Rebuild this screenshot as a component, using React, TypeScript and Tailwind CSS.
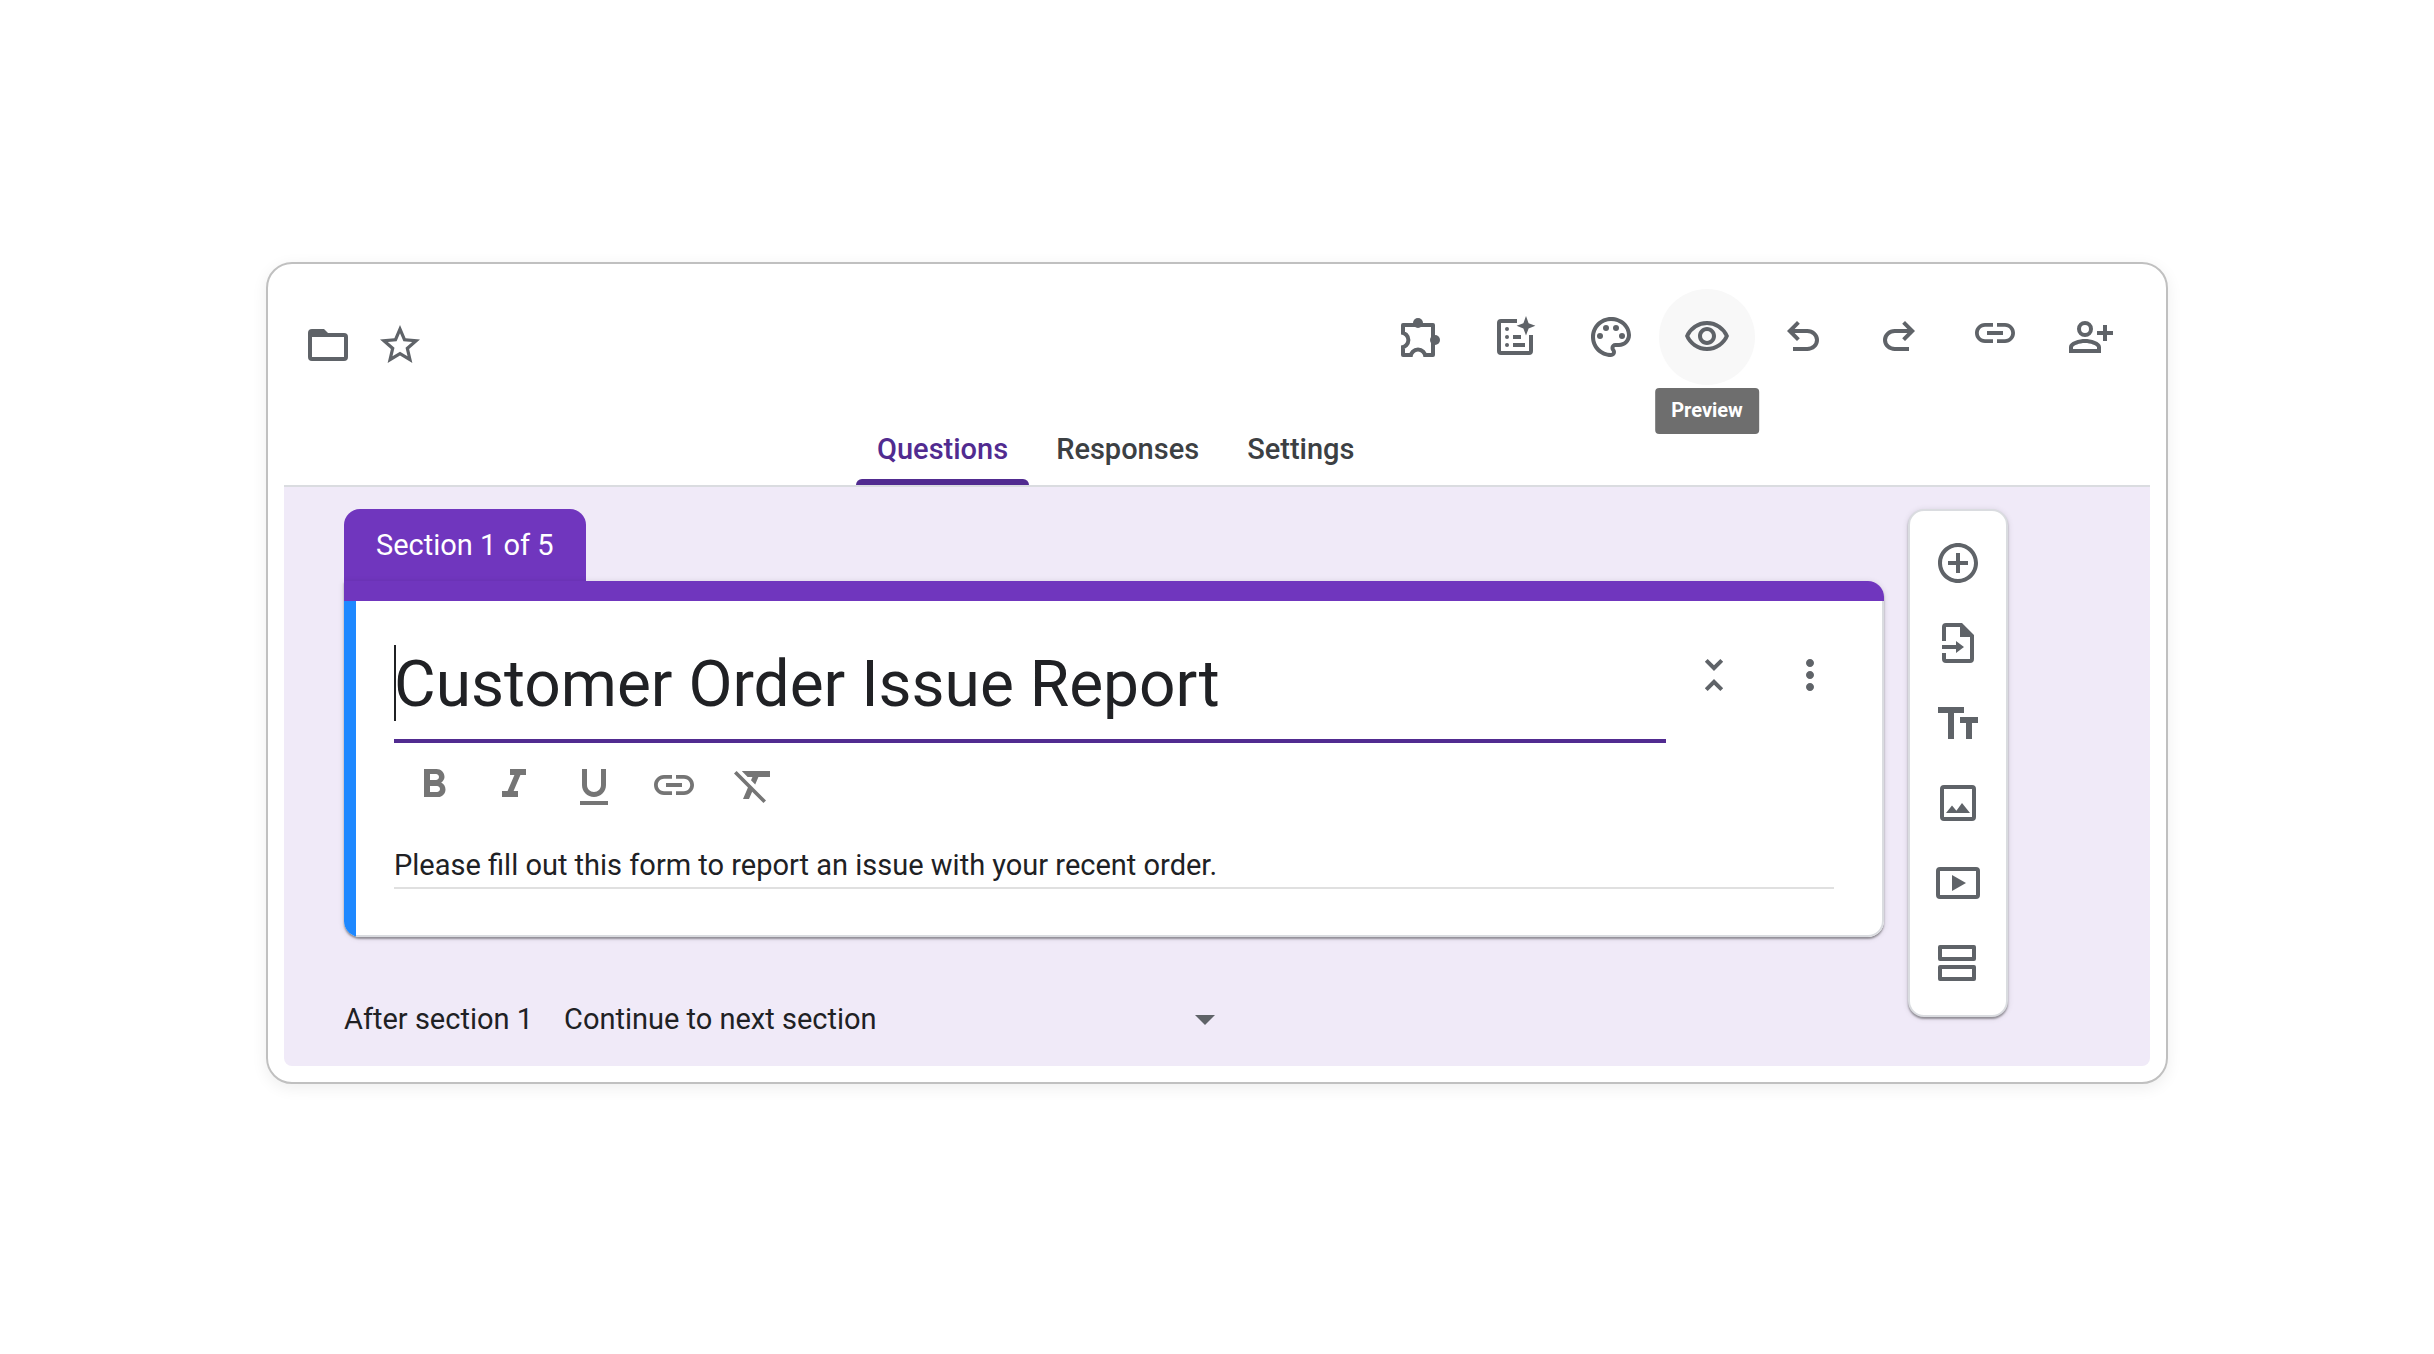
import React, { useState } from "react";

type IconProps = { children: React.ReactNode };

function Icon({ children }: IconProps) {
  return (
    <svg viewBox="0 0 24 24" className="size-12 shrink-0" fill="currentColor" aria-hidden="true">
      {children}
    </svg>
  );
}

const linkPath =
  "M3.9 12c0-1.71 1.39-3.1 3.1-3.1h4V7H7c-2.76 0-5 2.24-5 5s2.24 5 5 5h4v-1.9H7c-1.71 0-3.1-1.39-3.1-3.1zM8 13h8v-2H8v2zm9-6h-4v1.9h4c1.71 0 3.1 1.39 3.1 3.1s-1.39 3.1-3.1 3.1h-4V17h4c2.76 0 5-2.24 5-5s-2.24-5-5-5z";
const undoPath =
  "M7 19v-2h7.1q1.575 0 2.738-1T18 13.5T16.838 11T14.1 10H7.8l2.6 2.6L9 14L4 9l5-5l1.4 1.4L7.8 8h6.3q2.425 0 4.163 1.575T20 13.5t-1.737 3.925T14.1 19z";

const headerActions: { label: string; icon: React.ReactNode; tooltip?: boolean }[] = [
  {
    label: "Add-ons",
    icon: (
      <>
        <path
          d="M4 10.4V6H19V21H14.8M8.2 21H4V16.6M3 9.8A3.7 3.7 0 0 1 3 17.2M7.8 22A3.7 3.7 0 0 1 15.2 22"
          fill="none"
          stroke="currentColor"
          strokeWidth="2"
          strokeLinejoin="round"
        />
        <circle cx="11.5" cy="5" r="2.5" />
        <circle cx="20" cy="13.5" r="2.5" />
      </>
    ),
  },
  {
    label: "Help me create a form",
    icon: (
      <>
        <path d="M13 3H5a2 2 0 0 0-2 2v14a2 2 0 0 0 2 2h14a2 2 0 0 0 2-2v-8h-2v8H5V5h8z" />
        <circle cx="8" cy="8" r="1" />
        <circle cx="8" cy="12" r="1" />
        <circle cx="8" cy="16" r="1" />
        <path d="M11 11h4v2h-4zM11 15h6v2h-6z" />
        <path d="M17.5 1.5l1.3 3.6 3.4 1.3-3.4 1.3-1.3 3.6-1.3-3.6-3.4-1.3 3.4-1.3z" />
      </>
    ),
  },
  {
    label: "Customize theme",
    icon: (
      <>
        <path d="M12 22C6.49 22 2 17.51 2 12S6.49 2 12 2s10 4.04 10 9c0 3.31-2.69 6-6 6h-1.77c-.28 0-.5.22-.5.5 0 .12.05.23.13.33.41.47.64 1.06.64 1.67A2.5 2.5 0 0 1 12 22zm0-18c-4.41 0-8 3.59-8 8s3.59 8 8 8c.28 0 .5-.22.5-.5a.54.54 0 0 0-.14-.35c-.41-.46-.63-1.05-.63-1.65a2.5 2.5 0 0 1 2.5-2.5H16c2.21 0 4-1.79 4-4 0-3.86-3.59-7-8-7z" />
        <circle cx="6.5" cy="11.5" r="1.5" />
        <circle cx="9.5" cy="7.5" r="1.5" />
        <circle cx="14.5" cy="7.5" r="1.5" />
        <circle cx="17.5" cy="11.5" r="1.5" />
      </>
    ),
  },
  {
    label: "Preview",
    tooltip: true,
    icon: (
      <path d="M12 6a9.77 9.77 0 0 1 8.82 5.5C19.17 14.87 15.79 17 12 17s-7.17-2.13-8.82-5.5A9.77 9.77 0 0 1 12 6m0-2C7 4 2.73 7.11 1 11.5 2.73 15.89 7 19 12 19s9.27-3.11 11-7.5C21.27 7.11 17 4 12 4zm0 5a2.5 2.5 0 0 1 0 5 2.5 2.5 0 0 1 0-5m0-2c-2.48 0-4.5 2.02-4.5 4.5S9.52 16 12 16s4.5-2.02 4.5-4.5S14.48 7 12 7z" />
    ),
  },
  { label: "Undo", icon: <path d={undoPath} /> },
  { label: "Redo", icon: <path d={undoPath} transform="matrix(-1 0 0 1 24 0)" /> },
  { label: "Copy responder link", icon: <path d={linkPath} transform="translate(0 -2)" /> },
  {
    label: "Share",
    icon: (
      <path
        fillRule="evenodd"
        d="M9 4a4 4 0 1 0 0 8 4 4 0 0 0 0-8zm0 2a2 2 0 1 1 0 4 2 2 0 0 1 0-4zM1 17v3h16v-3c0-2.7-5.3-4-8-4s-8 1.3-8 4zm2 .1c.2-.9 3.3-2.1 6-2.1s5.8 1.2 6 2.1V18H3zM18 6v3h-3v2h3v3h2v-3h3V9h-3V6z"
      />
    ),
  },
];

const formatActions: { label: string; icon: React.ReactNode }[] = [
  {
    label: "Bold",
    icon: (
      <path d="M15.6 10.79c.97-.67 1.65-1.77 1.65-2.79 0-2.26-1.75-4-4-4H7v14h7.04c2.09 0 3.71-1.7 3.71-3.79 0-1.52-.86-2.82-2.15-3.42zM10 6.5h3c.83 0 1.5.67 1.5 1.5s-.67 1.5-1.5 1.5h-3v-3zm3.5 9H10v-3h3.5c.83 0 1.5.67 1.5 1.5s-.67 1.5-1.5 1.5z" />
    ),
  },
  { label: "Italic", icon: <path d="M10 4v3h2.21l-3.42 8H6v3h8v-3h-2.21l3.42-8H18V4z" /> },
  {
    label: "Underline",
    icon: (
      <path
        transform="translate(0 1)"
        d="M12 17c3.31 0 6-2.69 6-6V3h-2.5v8c0 1.93-1.57 3.5-3.5 3.5S8.5 12.93 8.5 11V3H6v8c0 3.31 2.69 6 6 6zm-7 2v2h14v-2H5z"
      />
    ),
  },
  { label: "Insert link", icon: <path d={linkPath} /> },
  {
    label: "Remove formatting",
    icon: (
      <path d="M3.27 5L2 6.27l6.97 6.97L6.5 19h3l1.57-3.66L16.73 21 18 19.73 3.55 5.27 3.27 5zM6 5v.18L8.82 8h2.4l-.72 1.68 2.1 2.1L14.21 8H20V5H6z" />
    ),
  },
];

const sideActions: { label: string; icon: React.ReactNode }[] = [
  {
    label: "Add question",
    icon: (
      <path d="M13 7h-2v4H7v2h4v4h2v-4h4v-2h-4V7zm-1-5C6.48 2 2 6.48 2 12s4.48 10 10 10 10-4.48 10-10S17.52 2 12 2zm0 18c-4.41 0-8-3.59-8-8s3.59-8 8-8 8 3.59 8 8-3.59 8-8 8z" />
    ),
  },
  {
    label: "Import questions",
    icon: (
      <>
        <path d="M14 2H6a2 2 0 0 0-2 2v7h2V4h7v5h5v11H6v-3H4v3a2 2 0 0 0 2 2h12a2 2 0 0 0 2-2V8z" />
        <path d="M4 13h7v-2l4 3-4 3v-2H4z" />
      </>
    ),
  },
  {
    label: "Add title and description",
    icon: <path d="M2 4v3h5v13h3V7h5V4zM13 9v3h3v8h3v-8h3V9z" />,
  },
  {
    label: "Add image",
    icon: (
      <>
        <path d="M19 5v14H5V5h14m0-2H5a2 2 0 0 0-2 2v14a2 2 0 0 0 2 2h14a2 2 0 0 0 2-2V5a2 2 0 0 0-2-2z" />
        <path d="M6 17l3-3.8 2.2 2.7L14 12l4 5z" />
      </>
    ),
  },
  {
    label: "Add video",
    icon: (
      <>
        <path d="M21 6v12H3V6h18m0-2H3a2 2 0 0 0-2 2v12a2 2 0 0 0 2 2h18a2 2 0 0 0 2-2V6a2 2 0 0 0-2-2z" />
        <path d="M9 8l7 4-7 4z" />
      </>
    ),
  },
  {
    label: "Add section",
    icon: (
      <path
        fillRule="evenodd"
        d="M3 3h17a1 1 0 0 1 1 1v6a1 1 0 0 1-1 1H3a1 1 0 0 1-1-1V4a1 1 0 0 1 1-1zm1 2v4h15V5zM3 13h17a1 1 0 0 1 1 1v6a1 1 0 0 1-1 1H3a1 1 0 0 1-1-1v-6a1 1 0 0 1 1-1zm1 2v4h15v-4z"
      />
    ),
  },
];

const tabs = ["Questions", "Responses", "Settings"];

function Header() {
  return (
    <header className="flex items-start justify-between pl-5 pr-[11px] pt-[9px] text-[#5f6368]">
      <div className="flex gap-6 pt-8">
        <button type="button" aria-label="Move to folder">
          <Icon>
            <path d="M20 6h-8l-2-2H4a2 2 0 0 0-2 2v12a2 2 0 0 0 2 2h16a2 2 0 0 0 2-2V8a2 2 0 0 0-2-2zm0 12H4V8h16z" />
          </Icon>
        </button>
        <button type="button" aria-label="Star">
          <Icon>
            <path d="M22 9.24l-7.19-.62L12 2 9.19 8.63 2 9.24l5.46 4.73L5.82 21 12 17.27 18.18 21l-1.63-7.03L22 9.24zM12 15.4l-3.76 2.27 1-4.28-3.32-2.88 4.38-.38L12 6.1l1.71 4.04 4.38.38-3.32 2.88 1 4.28L12 15.4z" />
          </Icon>
        </button>
      </div>
      <div className="flex">
        {headerActions.map((action) => (
          <div key={action.label} className="relative">
            <button
              type="button"
              aria-label={action.label}
              className={`flex size-24 items-center justify-center rounded-full ${action.tooltip ? "bg-[#f8f8f8]" : ""}`}
            >
              <Icon>{action.icon}</Icon>
            </button>
            {action.tooltip && (
              <span
                role="tooltip"
                className="absolute left-1/2 top-[99px] -translate-x-1/2 rounded bg-[#6e6e6e] px-4 pb-[10px] pt-2 text-[20px] font-bold leading-7 text-white"
              >
                Preview
              </span>
            )}
          </div>
        ))}
      </div>
    </header>
  );
}

function Tabs() {
  const [active, setActive] = useState("Questions");
  return (
    <nav role="tablist" className="flex gap-[6px] pl-[572px] pt-5">
      {tabs.map((tab) => {
        const selected = tab === active;
        return (
          <button
            key={tab}
            type="button"
            role="tab"
            aria-selected={selected}
            onClick={() => setActive(tab)}
            className={`pt-6 text-[29px] font-medium leading-10 ${selected ? "text-[#512b90]" : "text-[#3c4043]"}`}
          >
            <span className="block px-[21px] pb-[10px]">{tab}</span>
            <span className={`block h-[6px] rounded-t-[6px] ${selected ? "bg-[#512b90]" : ""}`} />
          </button>
        );
      })}
    </nav>
  );
}

function SectionCard() {
  const [title, setTitle] = useState("Customer Order Issue Report");
  const [description, setDescription] = useState(
    "Please fill out this form to report an issue with your recent order."
  );
  return (
    <section>
      <h2 className="flex h-[72px] w-fit items-start rounded-t-2xl bg-[#7036be] px-8 pt-4 text-[29px] leading-10 text-white">
        Section 1 of 5
      </h2>
      <div className="overflow-hidden rounded-b-2xl rounded-tr-2xl bg-white shadow-[0_2px_2px_rgba(0,0,0,0.35),0_1px_6px_rgba(0,0,0,0.12)]">
        <div className="h-5 bg-[#7036be]" />
        <div className="flex">
          <div className="w-3 shrink-0 bg-[#1e88ff]" />
          <div className="min-w-0 flex-1 rounded-br-2xl border-b-2 border-r-2 border-[#dadce0] pb-[46px] pl-[38px]">
            <div className="flex pr-6 text-[#5f6368]">
              <div className="relative flex-1 border-b-4 border-[#512b90] pb-[18px] pt-11">
                <input
                  type="text"
                  aria-label="Section title"
                  value={title}
                  onChange={(e) => setTitle(e.target.value)}
                  className="block h-[76px] w-full pt-[2px] text-[64px] leading-[74px] text-[#202124] outline-none"
                />
                <span className="absolute left-0 top-11 h-[76px] w-[2px] bg-[#202124]" />
              </div>
              <div className="flex pt-[26px]">
                <button type="button" aria-label="Collapse section" className="flex size-24 items-center justify-center">
                  <Icon>
                    <path d="M7.41 18.59L8.83 20 12 16.83 15.17 20l1.41-1.41L12 14l-4.59 4.59zm9.18-13.18L15.17 4 12 7.17 8.83 4 7.41 5.41 12 10l4.59-4.59z" />
                  </Icon>
                </button>
                <button type="button" aria-label="More options" className="flex size-24 items-center justify-center">
                  <Icon>
                    <path d="M12 8c1.1 0 2-.9 2-2s-.9-2-2-2-2 .9-2 2 .9 2 2 2zm0 2c-1.1 0-2 .9-2 2s.9 2 2 2 2-.9 2-2-.9-2-2-2zm0 6c-1.1 0-2 .9-2 2s.9 2 2 2 2-.9 2-2-.9-2-2-2z" />
                  </Icon>
                </button>
              </div>
            </div>
            <div className="flex gap-8 pl-4 pt-[18px] text-[#757575]">
              {formatActions.map((action) => (
                <button key={action.label} type="button" aria-label={action.label}>
                  <Icon>{action.icon}</Icon>
                </button>
              ))}
            </div>
            <div className="mr-12 mt-9 border-b-2 border-[#e0e0e0] pb-[2px]">
              <input
                type="text"
                aria-label="Section description"
                value={description}
                onChange={(e) => setDescription(e.target.value)}
                className="block h-10 w-full text-[29px] leading-10 text-[#202124] outline-none"
              />
            </div>
          </div>
        </div>
      </div>
    </section>
  );
}

function AfterSection() {
  return (
    <div className="flex pb-[27px] pt-[62px] text-[29px] leading-10 text-[#202124]">
      <label htmlFor="after-section" className="w-[220px] shrink-0">
        After section 1
      </label>
      <div className="relative w-[665px]">
        <select id="after-section" className="block h-10 w-full appearance-none bg-transparent outline-none">
          <option>Continue to next section</option>
        </select>
        <span className="pointer-events-none absolute -top-1 right-0 text-[#5f6368]">
          <Icon>
            <path d="M7 10l5 5 5-5z" />
          </Icon>
        </span>
      </div>
    </div>
  );
}

export default function App() {
  return (
    <div className="min-h-screen bg-white px-[266px] py-[262px] font-['Roboto',sans-serif]">
      <main className="rounded-[26px] border-2 border-[#c0c0c0] p-4 shadow-[0_4px_16px_rgba(0,0,0,0.07)]">
        <Header />
        <Tabs />
        <div className="flex items-start gap-6 rounded-b-lg border-t-2 border-[#dadce0] bg-[#f0eaf8] pl-[60px] pr-[142px] pt-[22px]">
          <div className="min-w-0 flex-1">
            <SectionCard />
            <AfterSection />
          </div>
          <aside
            aria-label="Add to form"
            className="flex shrink-0 flex-col rounded-2xl border-2 border-[#dadce0] bg-white py-3 shadow-[0_2px_2px_rgba(0,0,0,0.35),0_1px_6px_rgba(0,0,0,0.12)]"
          >
            {sideActions.map((action) => (
              <button
                key={action.label}
                type="button"
                aria-label={action.label}
                className="flex h-20 w-24 items-center justify-center text-[#5f6368]"
              >
                <Icon>{action.icon}</Icon>
              </button>
            ))}
          </aside>
        </div>
      </main>
    </div>
  );
}
